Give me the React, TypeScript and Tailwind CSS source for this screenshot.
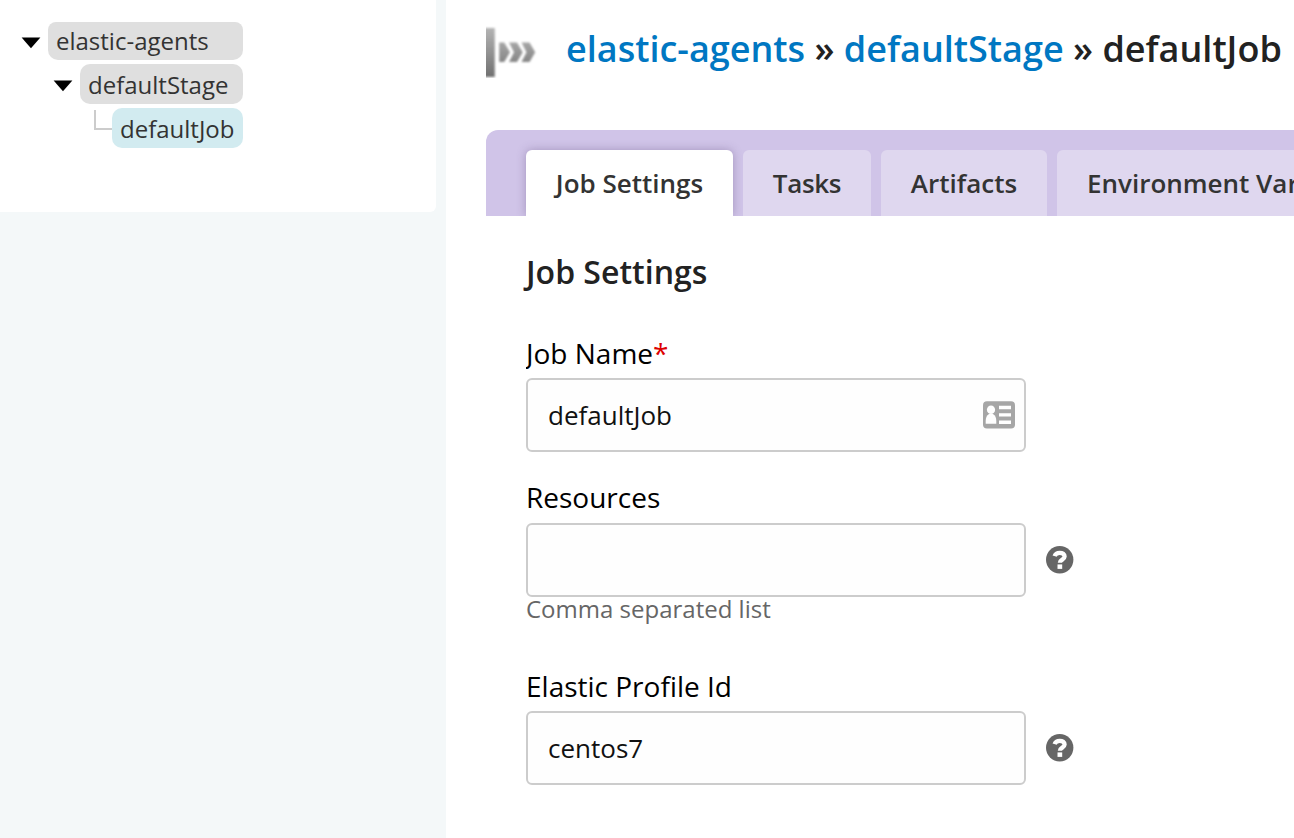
import type { ReactNode } from "react";

function Caret() {
  return (
    <svg className="mt-[4px] h-[12px] w-[20px] shrink-0" viewBox="0 0 20 12">
      <path d="M0.600 0.600h18.800L10 11.200z" fill="#000" />
    </svg>
  );
}

function Tree() {
  return (
    <nav className="h-[212px] w-[436px] rounded-br-md bg-white pt-[22px] text-[24px] leading-[38px] text-[#333]">
      <div className="flex w-[243px] flex-col gap-1">
        <div className="flex items-center gap-[7px] pl-[21px]">
          <Caret />
          <span className="h-[38px] flex-1 rounded-t-lg rounded-b-[10px] bg-[#dfdfdf] pl-2 whitespace-nowrap">
            <span>elastic-agents</span>
          </span>
        </div>
        <div className="flex items-center gap-[7px] pl-[53px]">
          <Caret />
          <span className="h-10 flex-1 rounded-[10px] bg-[#dfdfdf] pt-[2px] pl-2 whitespace-nowrap">defaultStage</span>
        </div>
        <div className="flex pl-[94px]">
          <span className="mt-[2px] h-5 w-[18px] border-b-2 border-l-2 border-[#ccc]" />
          <span className="h-10 flex-1 rounded-[10px] bg-[#d2ebf0] pt-[2px] pl-2 whitespace-nowrap">defaultJob</span>
        </div>
      </div>
    </nav>
  );
}

function StageIcon() {
  return (
    <svg className="h-[52px] w-[52px] shrink-0" viewBox="0 0 52 52">
      <defs>
        <linearGradient id="bar" x1="0" y1="0" x2="0" y2="1">
          <stop offset="0" stopColor="#b4b4b4" />
          <stop offset="1" stopColor="#707070" />
        </linearGradient>
        <linearGradient id="arrow" x1="0" y1="0" x2="0" y2="1">
          <stop offset="0" stopColor="#a6a6a6" />
          <stop offset="1" stopColor="#868686" />
        </linearGradient>
        <filter id="soft" x="-10%" y="-10%" width="120%" height="120%">
          <feGaussianBlur stdDeviation="0.8" />
        </filter>
      </defs>
      <g filter="url(#soft)">
        <rect x="-3" y="2" width="11.8" height="49" fill="url(#bar)" />
        <path d="M13.200 16.500h5l5.800 9.750-5.800 9.750h-5z" fill="url(#arrow)" />
        <path d="M23 16.500h8l5.700 9.750L31 36h-8l5-9.750z" fill="url(#arrow)" />
        <path d="M35.500 16.500h8l5.700 9.750L43.500 36h-8l5-9.750z" fill="url(#arrow)" />
      </g>
    </svg>
  );
}

function ContactCard() {
  return (
    <svg className="h-[28px] w-[32px]" viewBox="0 0 32 28">
      <rect y="0.3" width="32" height="27.2" rx="4" fill="#a6a6a6" />
      <ellipse cx="8" cy="8.700" rx="4.100" ry="4.300" fill="#fff" />
      <path d="M2.700 22.800v-2.800c0-3.500 1-5.500 3.300-7h4c2.300 1.500 3.300 3.500 3.300 7v2.800z" fill="#fff" />
      <path d="M16 4.800h12v3.400H16zM16 12.200h12v3.400H16zM16 19.500h12v3.400H16z" fill="#fff" />
    </svg>
  );
}

function HelpIcon() {
  return (
    <svg className="-mt-px ml-5 h-[28px] w-[28px]" viewBox="0 0 28 28">
      <circle cx="13.700" cy="13.700" r="13.700" fill="#666" />
      <path d="M8.600 10.200C9.300 7.900 11.200 6.800 13.800 6.800c2.800 0 4.800 1.400 4.800 3.700 0 3.200-4.700 3-4.700 6.300" fill="none" stroke="#fff" strokeWidth="4.300" />
      <path d="M11.500 18.400h4.700v4.500h-4.700z" fill="#fff" />
    </svg>
  );
}

function Field({ label, value, required, help, icon }: { label: string; value: string; required?: boolean; help?: boolean; icon?: ReactNode }) {
  return (
    <div>
      <label className="block h-[36px] overflow-hidden text-[28px] leading-[36px] text-black">
        <span>{label}</span>
        {required && <span className="text-[#d00]">*</span>}
      </label>
      <div className={value ? "mt-[7px] flex items-center" : "mt-[8px] flex items-center"}>
        <div className="flex h-[74px] w-[500px] items-center justify-between rounded-md border-2 border-[#ccc] bg-[#fefefe] pr-[9px] pl-5 text-[26px] text-[#111]">
          <span>{value}</span>
          {icon}
        </div>
        {help && <HelpIcon />}
      </div>
    </div>
  );
}

export default function App() {
  return (
    <div className="flex h-[838px] w-[1294px] overflow-hidden bg-white font-['Open_Sans',sans-serif]">
      <aside className="w-[446px] shrink-0 bg-[#f4f8f9]">
        <Tree />
      </aside>
      <main className="w-[848px] shrink-0 overflow-hidden pl-10">
        <header className="flex h-[130px] items-start pt-[26px]">
          <StageIcon />
          <h1 className="-mt-[2px] ml-[28px] text-[36px] leading-[50px] font-semibold whitespace-nowrap text-[#222]">
            <a className="text-[#0077c2]">elastic-agents</a> » <a className="text-[#0077c2]">defaultStage</a> » <span>defaultJob</span>
          </h1>
        </header>
        <div className="flex h-[86px] w-[1100px] gap-[10px] overflow-hidden rounded-tl-xl bg-[#d0c4e8] pt-5 pl-10 text-[26px] leading-[66px] font-semibold whitespace-nowrap text-[#333]">
          <div className="w-[207px] rounded-t-md bg-white text-center shadow-[0_0_10px_rgba(80,60,110,0.35)]">Job Settings</div>
          <div className="w-[128px] rounded-t-md bg-[#dfd7ef] text-center tracking-[-0.3px]">Tasks</div>
          <div className="w-[166px] rounded-t-md bg-[#dfd7ef] text-center">Artifacts</div>
          <div className="w-[340px] rounded-t-md bg-[#dfd7ef] pl-[30px]">Environment Variables</div>
        </div>
        <section className="pt-[34px] pl-10">
          <h2 className="text-[32px] leading-[44px] font-semibold text-[#222]">Job Settings</h2>
          <div className="mt-[41px]">
            <Field label="Job Name" value="defaultJob" required icon={<ContactCard />} />
          </div>
          <div className="mt-[27px]">
            <Field label="Resources" value="" help />
            <p className="-mt-px text-[24px] leading-[26px] text-[#666]">Comma separated list</p>
          </div>
          <div className="mt-[46px]">
            <Field label="Elastic Profile Id" value="centos7" help />
          </div>
        </section>
      </main>
    </div>
  );
}
